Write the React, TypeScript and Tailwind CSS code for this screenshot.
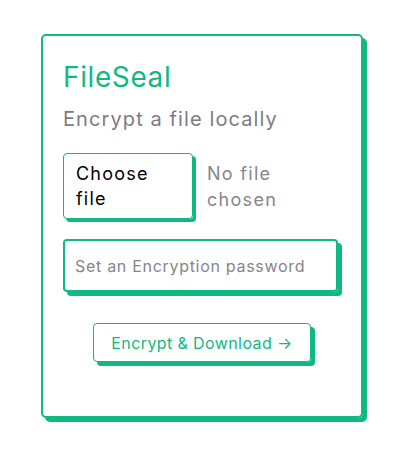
export default function App() {
  return (
    <div className="min-h-screen bg-white pt-[34px] pl-[41px]" style={{ fontFamily: 'Inter, "Liberation Sans", sans-serif' }}>
      <div className="w-[322px] h-[384px] rounded-[5px] border-2 border-[#10b981] shadow-[4px_4px_0_#10b981] px-5 pt-[23px]">
        <h1 className="text-[28px] leading-[36px] text-[#10b981] tracking-[0.6px]">FileSeal</h1>
        <p className="mt-[10px] text-[20px] leading-[28px] text-[#7b7b85] tracking-[1.1px]">Encrypt a file locally</p>

        <div className="mt-[20px] flex items-start gap-[14px]">
          <button className="w-[130px] h-[66px] rounded-[4px] border border-[#10b981] shadow-[3px_3px_0_#10b981] px-[12px] text-left text-[18px] leading-[25px] tracking-[1.2px] text-black">
            Choose file
          </button>
          <div className="pt-[8px] text-[18px] leading-[26px] tracking-[1.3px] text-[#85858c]">No file<br />chosen</div>
        </div>

        <input
          className="mt-[20px] block w-[275px] h-[53px] rounded-[4px] border-2 border-[#10b981] shadow-[4px_4px_0_#10b981] px-[10px] text-[16px] tracking-[0.7px] outline-none placeholder:text-[#85858c]"
          placeholder="Set an Encryption password"
        />

        <div className="mt-[31px] flex justify-center">
          <button className="w-[218px] h-[39px] rounded-[4px] border border-[#10b981] shadow-[4px_4px_0_#10b981] text-[16px] tracking-[0.4px] text-[#10b981]">
            Encrypt &amp; Download →
          </button>
        </div>
      </div>
    </div>
  )
}
